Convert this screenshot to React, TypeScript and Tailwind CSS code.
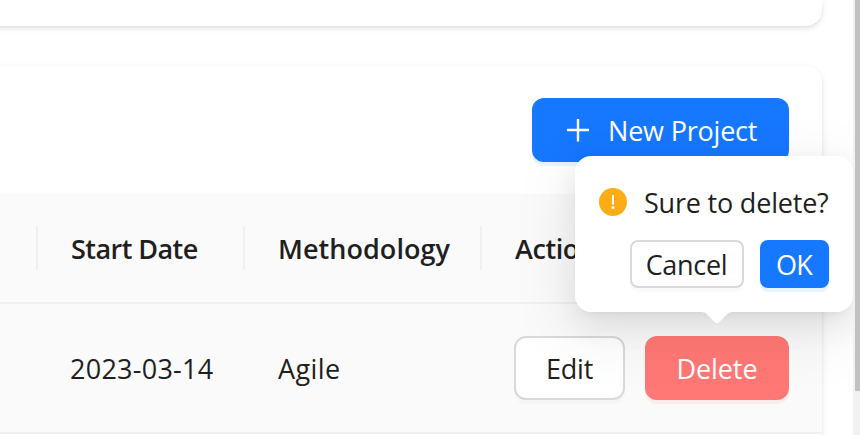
import React from "react";

const cardShadow =
  "shadow-[0_2px_6px_rgba(0,0,0,0.10),0_2px_4px_-2px_rgba(0,0,0,0.10)]";

function HeaderCell({ label, width, tracking, divider = true }: { label: string; width: string; tracking: string; divider?: boolean }) {
  return (
    <div className={`flex h-full shrink-0 items-center justify-between ${width}`}>
      <span className={`whitespace-nowrap pl-[33px] pt-0.5 font-semibold ${tracking}`}>{label}</span>
      {divider && <span className="h-11 w-0.5 bg-[#f0f0f0]" />}
    </div>
  );
}

function WarningIcon() {
  return (
    <svg className="size-7 shrink-0" viewBox="0 0 28 28">
      <circle cx="14" cy="14" r="14" fill="#faad14" />
      <path d="M13 7h2v9.5h-2z" fill="#fff" />
      <circle cx="14" cy="19.5" r="1.5" fill="#fff" />
    </svg>
  );
}

function Popconfirm() {
  return (
    <div className="absolute left-[575px] top-[156px] h-[156px] w-[278px] rounded-2xl bg-white px-6 pt-6 shadow-[0_12px_32px_rgba(0,0,0,0.08),0_6px_12px_-8px_rgba(0,0,0,0.12),0_18px_56px_16px_rgba(0,0,0,0.05)]">
      <div className="flex h-11 items-center">
        <WarningIcon />
        <span className="ml-[17px] mt-0.5 whitespace-nowrap tracking-[-0.2px]">Sure to delete?</span>
      </div>
      <div className="mt-4 flex justify-end gap-4">
        <button className="flex h-12 w-[114px] items-center justify-center rounded-lg border-2 border-[#d9d9d9] bg-white pr-px pt-0.5 tracking-[-0.3px] shadow-[0_4px_0_rgba(0,0,0,0.02)]">
          Cancel
        </button>
        <button className="flex h-12 w-[69px] items-center justify-center rounded-lg bg-[#1677ff] pr-px pt-0.5 tracking-[-0.8px] text-white shadow-[0_4px_0_rgba(5,145,255,0.1)]">
          OK
        </button>
      </div>
      <svg className="absolute left-[126px] top-[156px] h-3 w-8" viewBox="0 0 32 12">
        <path d="M0 0C2.6 0 4.5.8 6.2 2.5L13.6 10C15.2 11.7 16.8 11.7 18.4 10L25.8 2.5C27.5.8 29.4 0 32 0Z" fill="#fff" />
      </svg>
    </div>
  );
}

export default function App() {
  return (
    <div className="relative flex h-[435px] w-[860px] overflow-hidden bg-white font-['Open_Sans','Noto_Sans',sans-serif] text-[27px] leading-[44px] text-[#1f1f1f]">
      <main className="flex w-[822px] shrink-0 flex-col gap-10">
        <section className={`-ml-6 h-[26px] shrink-0 rounded-br-2xl bg-white ${cardShadow}`} />
        <section className={`-ml-6 h-[420px] shrink-0 rounded-tr-2xl bg-white pt-8 ${cardShadow}`}>
          <div className="flex h-24 justify-end pr-[33px]">
            <button className="flex h-16 w-[257px] items-center rounded-xl bg-[#1677ff] pl-8 text-white shadow-[0_4px_0_rgba(5,145,255,0.1)]">
              <svg className="size-7" viewBox="0 0 28 28" fill="none" stroke="currentColor" strokeWidth="2.4">
                <path d="M14 3v22.5M3 14h22" />
              </svg>
              <span className="ml-4 mt-0.5 whitespace-nowrap tracking-[-0.2px]">New Project</span>
            </button>
          </div>
          <div className="flex h-[110px] items-center border-b-2 border-[#f0f0f0] bg-[#fafafa] pl-6">
            <HeaderCell label="" width="w-[38px]" tracking="tracking-normal" />
            <HeaderCell label="Start Date" width="w-[207px]" tracking="tracking-[-0.55px]" />
            <HeaderCell label="Methodology" width="w-[237px]" tracking="tracking-[0.05px]" />
            <HeaderCell label="Action" width="w-[340px]" tracking="tracking-[-0.4px]" divider={false} />
          </div>
          <div className="flex h-[130px] items-center border-b-2 border-[#f0f0f0] bg-[#fafafa] pl-6">
            <span className="ml-[38px] w-[207px] whitespace-nowrap pl-8 pt-0.5 tracking-[0.25px]">2023-03-14</span>
            <span className="w-[237px] pl-[33px] pt-0.5 tracking-[0.4px]">Agile</span>
            <div className="flex gap-5 pl-8">
              <button className="flex h-16 w-[111px] items-center justify-center rounded-xl border-2 border-[#d9d9d9] bg-white pt-0.5 tracking-[-0.2px] shadow-[0_4px_0_rgba(0,0,0,0.02)]">
                Edit
              </button>
              <button className="flex h-16 w-36 items-center justify-center rounded-xl bg-[#ff7875] pt-0.5 tracking-[-0.1px] text-white shadow-[0_4px_0_rgba(255,38,5,0.06)]">
                Delete
              </button>
            </div>
          </div>
        </section>
      </main>
      <Popconfirm />
      <div className="relative ml-auto h-full w-[7px] bg-[#f1f1f1] pl-0.5">
        <div className="h-[391px] bg-[#c1c1c1]" />
      </div>
    </div>
  );
}
